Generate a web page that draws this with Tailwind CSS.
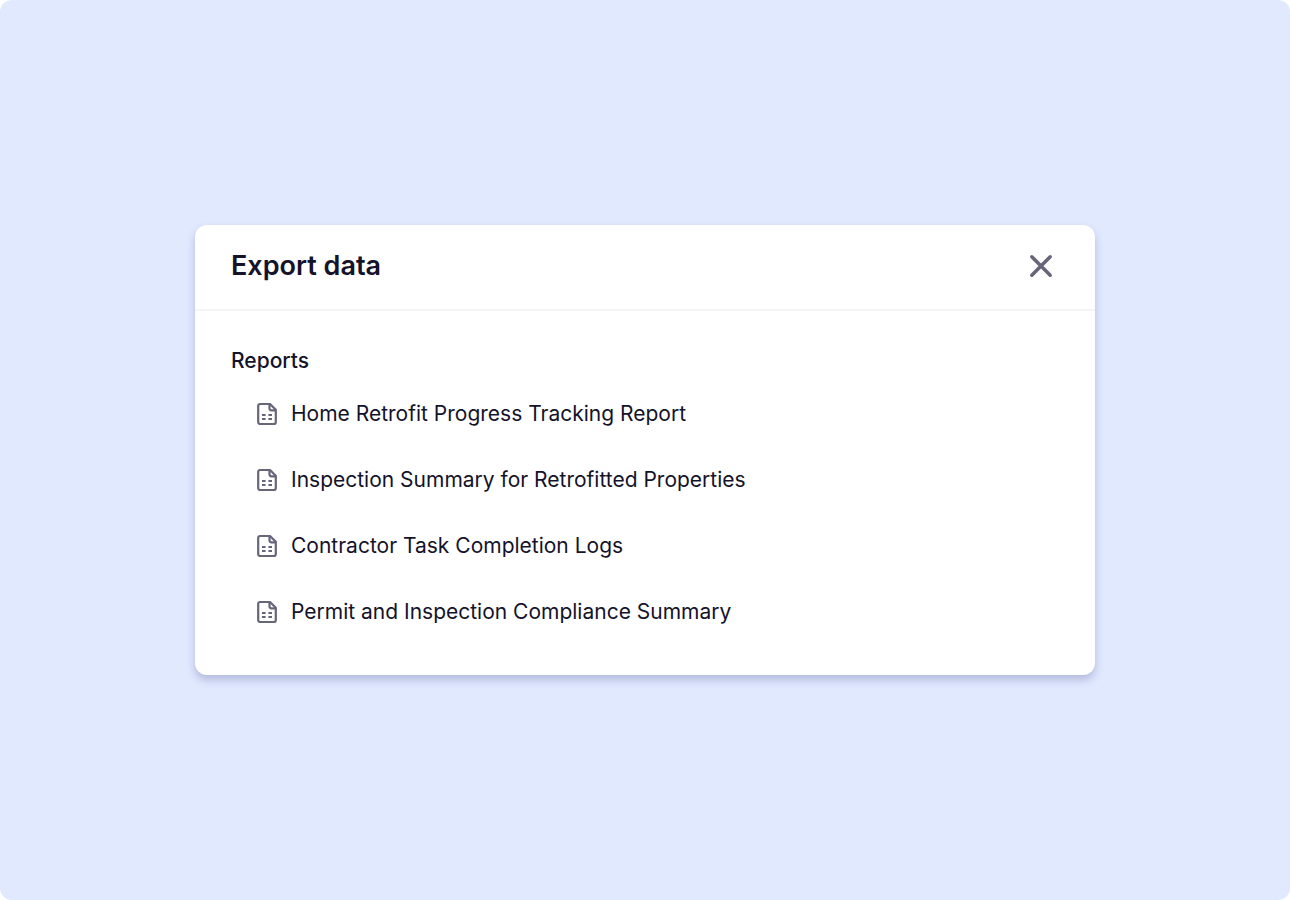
<!DOCTYPE html>
<html lang="en">
<head>
    <meta charset="UTF-8">
    <meta name="viewport" content="width=device-width, initial-scale=1.0">
    <title>Export data</title>
    <script src="https://cdn.jsdelivr.net/npm/@tailwindcss/browser@4"></script>
</head>
<body class="bg-white font-['Inter',sans-serif] text-[#14132a]">
    <!-- file icon shared by the report rows -->
    <svg class="hidden">
        <symbol id="report-icon" viewBox="0 0 24 24" fill="none" stroke="currentColor" stroke-width="2.2" stroke-linejoin="round">
            <path d="M15 2H5A2 2 0 0 0 3.200 4v16a2 2 0 0 0 2 2h13.600a2 2 0 0 0 2-2V7.800z" />
            <path d="M14.500 2V6.300a2 2 0 0 0 2 2h4.200" />
            <path d="M7 13h3.600M13.400 13h3.600M7 17h3.600M13.400 17h3.600" />
        </symbol>
    </svg>

    <main class="min-h-screen bg-[#e1e9ff] rounded-xl flex items-center justify-center p-6">
        <section class="bg-white w-full max-w-[900px] rounded-xl shadow-[0_5px_8px_rgba(60,70,130,0.28)]" aria-labelledby="dialog-title">
            <header class="flex items-center justify-between px-9 pt-[21px] pb-[23px] border-b-2 border-[#f4f4f6]">
                <h1 id="dialog-title" class="text-[27px] leading-10 font-semibold">Export data</h1>
                <button type="button" aria-label="Close" class="text-[#66657a] cursor-pointer">
                    <svg class="size-9" viewBox="0 0 36 36" fill="none" stroke="currentColor" stroke-width="3.5" stroke-linecap="round">
                        <path d="M8.800 8.800l18.400 18.400M27.200 8.800l-18.400 18.400" />
                    </svg>
                </button>
            </header>
            <div class="px-9 pt-8 pb-[30px]">
                <h2 class="text-[21px] leading-9 font-medium">Reports</h2>
                <ul class="pl-6 pt-0.5">
                    <li>
                        <a href="#" class="flex items-center gap-3 py-[15px] text-[21px] leading-9">
                            <svg class="size-6 shrink-0 text-[#66657a]"><use href="#report-icon" /></svg>
                            Home Retrofit Progress Tracking Report
                        </a>
                    </li>
                    <li>
                        <a href="#" class="flex items-center gap-3 py-[15px] text-[21px] leading-9">
                            <svg class="size-6 shrink-0 text-[#66657a]"><use href="#report-icon" /></svg>
                            Inspection Summary for Retrofitted Properties
                        </a>
                    </li>
                    <li>
                        <a href="#" class="flex items-center gap-3 py-[15px] text-[21px] leading-9">
                            <svg class="size-6 shrink-0 text-[#66657a]"><use href="#report-icon" /></svg>
                            Contractor Task Completion Logs
                        </a>
                    </li>
                    <li>
                        <a href="#" class="flex items-center gap-3 py-[15px] text-[21px] leading-9">
                            <svg class="size-6 shrink-0 text-[#66657a]"><use href="#report-icon" /></svg>
                            Permit and Inspection Compliance Summary
                        </a>
                    </li>
                </ul>
            </div>
        </section>
    </main>
</body>
</html>
